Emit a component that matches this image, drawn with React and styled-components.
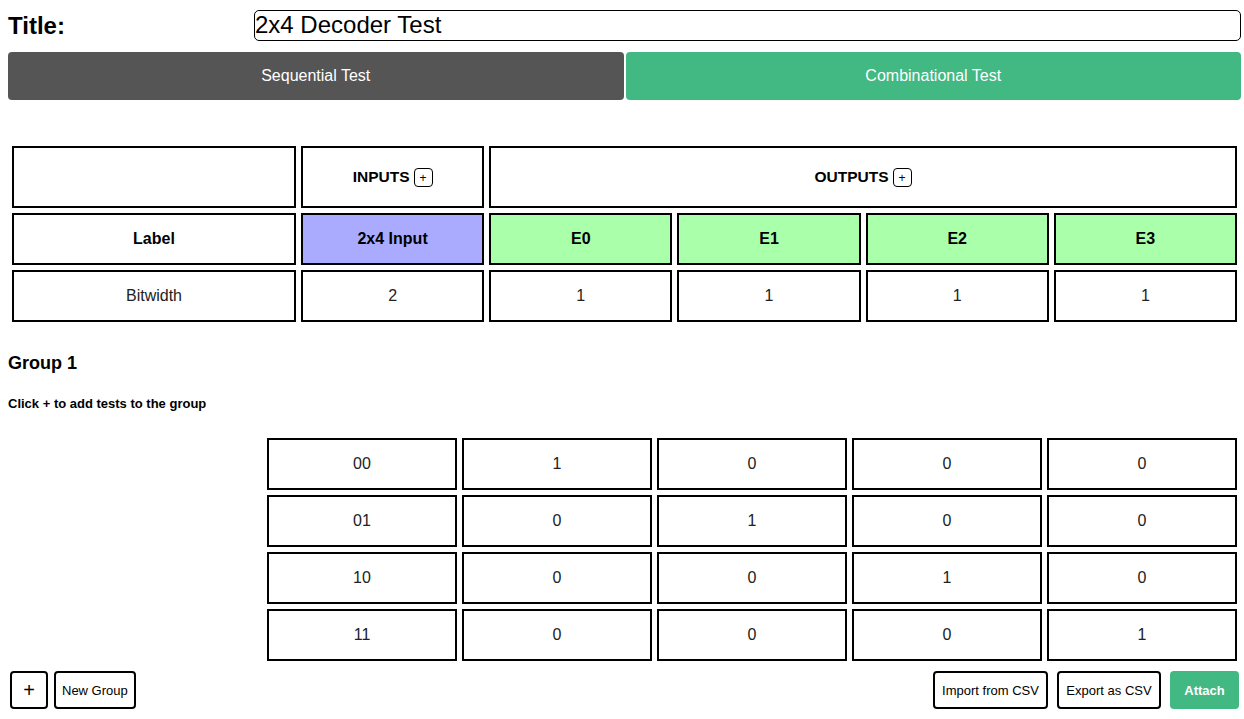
import React from "react";
import styled, { createGlobalStyle } from "styled-components";

const GlobalStyle = createGlobalStyle`
  body {
    margin: 0;
    background: #ffffff;
    font-family: "Liberation Sans", Arial, sans-serif;
    color: #000;
  }
`;

const outputs = ["E0", "E1", "E2", "E3"];

const tests = [
  { input: "00", out: [1, 0, 0, 0] },
  { input: "01", out: [0, 1, 0, 0] },
  { input: "10", out: [0, 0, 1, 0] },
  { input: "11", out: [0, 0, 0, 1] },
];

const Page = styled.div`
  padding: 10px 3px 0 8px;
  width: 1244px;
  box-sizing: border-box;
`;

const TitleRow = styled.div`
  display: flex;
  align-items: center;
  height: 31px;
`;

const TitleLabel = styled.div`
  width: 246px;
  font-size: 24px;
  font-weight: bold;
`;

const TitleInput = styled.input`
  flex: 1;
  height: 31px;
  box-sizing: border-box;
  border: 1px solid #000;
  border-radius: 5px;
  padding: 0 0 2px 0;
  font-family: "Liberation Sans", Arial, sans-serif;
  font-size: 24px;
  color: #000;
  outline: none;
`;

const Tabs = styled.div`
  display: flex;
  gap: 2px;
  margin-top: 11px;
`;

const Tab = styled.button`
  flex: 1;
  height: 48px;
  border: none;
  border-radius: 4px;
  background: ${(p) => (p.$active ? "#42b883" : "#555555")};
  color: #fff;
  font-family: "Liberation Sans", Arial, sans-serif;
  font-size: 16px;
`;

const HeadGrid = styled.div`
  display: grid;
  grid-template-columns: 284px repeat(5, 1fr);
  grid-template-rows: 62px 52px 52px;
  gap: 5px;
  margin: 46px 4px 0 4px;
`;

const Cell = styled.div`
  box-sizing: border-box;
  border: 2px solid #000;
  background: ${(p) => p.$bg || "#fff"};
  display: flex;
  align-items: center;
  justify-content: center;
  gap: 4px;
  font-size: ${(p) => (p.$head ? "15.5px" : "16px")};
  font-weight: ${(p) => (p.$bold ? "bold" : "normal")};
  color: ${(p) => (p.$bold ? "#000" : "#222")};
  grid-column: ${(p) => p.$span || "auto"};
`;

const PlusBox = styled.span`
  display: inline-flex;
  align-items: center;
  justify-content: center;
  width: 19px;
  height: 19px;
  box-sizing: border-box;
  border: 1.5px solid #000;
  border-radius: 4px;
  font-size: 12px;
  font-weight: normal;
  margin-top: 1px;
`;

const GroupTitle = styled.h3`
  margin: 31px 0 0 0;
  font-size: 18px;
  font-weight: bold;
  line-height: 20px;
`;

const Hint = styled.p`
  margin: 23px 0 0 0;
  font-size: 13px;
  font-weight: bold;
  line-height: 16px;
`;

const TestWrap = styled.div`
  display: flex;
  justify-content: flex-end;
  margin: 26px 4px 0 0;
`;

const TestGrid = styled.div`
  display: grid;
  grid-template-columns: repeat(5, 190px);
  grid-auto-rows: 52px;
  gap: 5px;
`;

const Footer = styled.div`
  display: flex;
  align-items: center;
  margin-top: 10px;
  padding-left: 2px;
  padding-right: 2px;
`;

const Spacer = styled.div`
  flex: 1;
`;

const Btn = styled.button`
  height: 38px;
  box-sizing: border-box;
  border: ${(p) => (p.$green ? "none" : "2px solid #000")};
  border-radius: 4px;
  background: ${(p) => (p.$green ? "#42b883" : "#fff")};
  color: ${(p) => (p.$green ? "#fff" : "#000")};
  font-family: "Liberation Sans", Arial, sans-serif;
  font-size: ${(p) => (p.$big ? "20px" : "13px")};
  font-weight: ${(p) => (p.$green ? "bold" : "normal")};
  padding: 0 ${(p) => (p.$big ? "0" : "6px")};
  width: ${(p) => p.$w || "auto"};
  margin-right: ${(p) => p.$mr || "0"};
`;

export default function App() {
  return (
    <>
      <GlobalStyle />
      <Page>
        <TitleRow>
          <TitleLabel>Title:</TitleLabel>
          <TitleInput defaultValue="2x4 Decoder Test" />
        </TitleRow>
        <Tabs>
          <Tab>Sequential Test</Tab>
          <Tab $active>Combinational Test</Tab>
        </Tabs>

        <HeadGrid>
          <Cell />
          <Cell $bold $head>
            INPUTS <PlusBox>+</PlusBox>
          </Cell>
          <Cell $bold $head $span="span 4">
            OUTPUTS <PlusBox>+</PlusBox>
          </Cell>

          <Cell $bold>Label</Cell>
          <Cell $bold $bg="#aaaaff">2x4 Input</Cell>
          {outputs.map((o) => (
            <Cell key={o} $bold $bg="#aaffaa">
              {o}
            </Cell>
          ))}

          <Cell>Bitwidth</Cell>
          <Cell>2</Cell>
          {outputs.map((o) => (
            <Cell key={o}>1</Cell>
          ))}
        </HeadGrid>

        <GroupTitle>Group 1</GroupTitle>
        <Hint>Click + to add tests to the group</Hint>

        <TestWrap>
          <TestGrid>
            {tests.map((t) => (
              <React.Fragment key={t.input}>
                <Cell>{t.input}</Cell>
                {t.out.map((v, i) => (
                  <Cell key={i}>{v}</Cell>
                ))}
              </React.Fragment>
            ))}
          </TestGrid>
        </TestWrap>

        <Footer>
          <Btn $big $w="38px" $mr="6px">+</Btn>
          <Btn>New Group</Btn>
          <Spacer />
          <Btn $mr="9px" $w="115px">Import from CSV</Btn>
          <Btn $mr="9px" $w="104px">Export as CSV</Btn>
          <Btn $green $w="69px">Attach</Btn>
        </Footer>
      </Page>
    </>
  );
}
